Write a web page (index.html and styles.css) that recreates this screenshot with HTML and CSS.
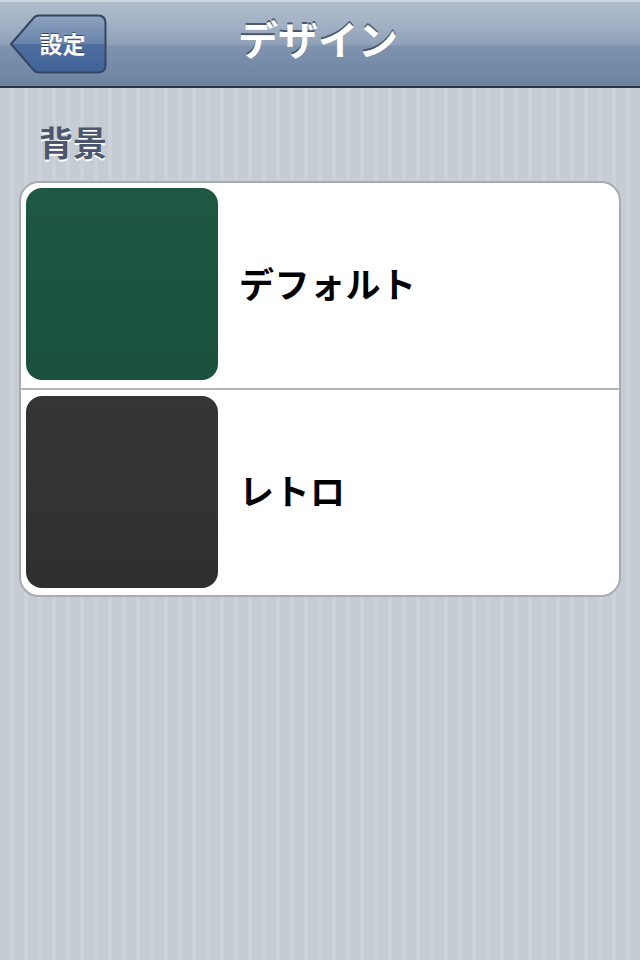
FILE: index.html
```html
<!DOCTYPE html>
<html lang="ja">
<head>
<meta charset="utf-8">
<title>デザイン</title>
<link rel="stylesheet" href="styles.css">
</head>
<body>
<div class="screen">
  <header class="navbar">
    <div class="nav-left">
      <a class="back-btn" href="#">
        <svg class="back-shape" width="98" height="60" viewBox="0 0 98 60">
          <defs>
            <linearGradient id="bg" x1="0" y1="0" x2="0" y2="1">
              <stop offset="0" stop-color="#8da2c0"/>
              <stop offset="0.5" stop-color="#6883ab"/>
              <stop offset="0.5" stop-color="#4f6f9f"/>
              <stop offset="1" stop-color="#3f6298"/>
            </linearGradient>
          </defs>
          <path d="M2 30 L25 3.5 Q27 1.5 30 1.5 H89 Q96.5 1.5 96.5 9 V51 Q96.5 58.5 89 58.5 H30 Q27 58.5 25 56.5 Z" fill="url(#bg)" stroke="#36465f" stroke-width="2"/>
        </svg>
        <span class="back-label">設定</span>
      </a>
    </div>
    <h1 class="nav-title">デザイン</h1>
    <div class="nav-right"></div>
  </header>
  <main class="content">
    <h2 class="section-title">背景</h2>
    <ul class="group">
      <li class="row">
        <div class="swatch swatch-green"></div>
        <span class="row-label">デフォルト</span>
      </li>
      <li class="row">
        <div class="swatch swatch-dark"></div>
        <span class="row-label">レトロ</span>
      </li>
    </ul>
  </main>
</div>
</body>
</html>
```
FILE: styles.css
```css
* { box-sizing: border-box; }
html, body { margin: 0; padding: 0; }
body {
  width: 640px;
  height: 960px;
  font-family: "Noto Sans CJK JP", "Noto Sans", sans-serif;
  background-color: #c5ccd4;
  background-image: repeating-linear-gradient(90deg, #c5ccd4 0, #c5ccd4 10px, #cbd2d9 10px, #cbd2d9 14px);
  overflow: hidden;
}
.screen { width: 640px; height: 960px; }

.navbar {
  height: 88px;
  display: grid;
  grid-template-columns: 1fr auto 1fr;
  align-items: center;
  background: linear-gradient(#b1bdcd 0, #a2b1c4 22px, #8ea0b8 43px, #7f93ae 44px, #7289a7 70px, #6c82a1 86px);
  border-top: 2px solid #cdd5de;
  border-bottom: 2px solid #2c3540;
}
.nav-left { display: flex; align-items: center; padding-left: 9px; }
.back-btn {
  position: relative;
  width: 98px;
  height: 60px;
  display: flex;
  align-items: center;
  justify-content: center;
  text-decoration: none;
}
.back-shape { position: absolute; left: 0; top: 0; }
.back-label {
  position: relative;
  color: #fff;
  font-size: 23px;
  font-weight: 700;
  padding-left: 9px;
  padding-bottom: 2px;
  text-shadow: 0 -1px 0 rgba(0,0,0,0.45);
}
.nav-title {
  margin: 0;
  color: #fff;
  font-size: 40px;
  font-weight: 700;
  line-height: 1;
  padding-bottom: 12px;
  padding-right: 4px;
  text-shadow: 0 -2px 0 rgba(40,50,70,0.7);
}

.content { padding: 0 19px; }
.section-title {
  margin: 0;
  padding: 30px 0 0 20px;
  height: 93px;
  font-size: 34px;
  font-weight: 700;
  line-height: 48px;
  color: #4c566c;
  text-shadow: 0 2px 0 #fff;
}
.group {
  list-style: none;
  margin: 0;
  padding: 0;
  width: 602px;
  background: #fff;
  border: 2px solid #a9abae;
  border-radius: 20px;
  overflow: hidden;
}
.row {
  height: 205px;
  display: flex;
  align-items: center;
  padding-left: 5px;
  gap: 21px;
}
.row + .row { border-top: 2px solid #b3b3b3; height: 207px; }
.swatch {
  width: 192px;
  height: 192px;
  border-radius: 16px;
  flex: none;
  align-self: flex-start;
  margin-top: 5px;
}
.row + .row .swatch { margin-top: 6px; }
.swatch-green {
  background: linear-gradient(#1f5843, #1c5440 50%, #1b513d);
}
.swatch-dark {
  background: linear-gradient(#353535, #333333 50%, #2f2f2f);
}
.row-label {
  font-size: 35px;
  font-weight: 700;
  color: #000;
  letter-spacing: 0.5px;
  padding-bottom: 6px;
}
```
